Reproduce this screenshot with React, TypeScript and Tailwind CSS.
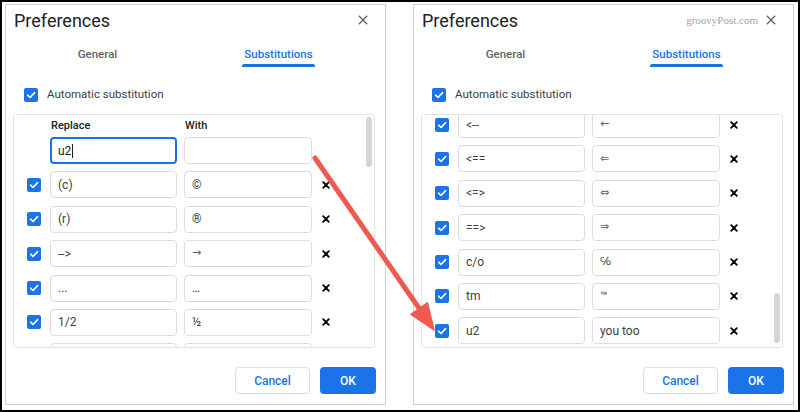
type Row = { from: string; to: string; sym?: boolean };

const leftRows: Row[] = [
  { from: "(c)", to: "©" },
  { from: "(r)", to: "®" },
  { from: "-->", to: "→", sym: true },
  { from: "...", to: "…" },
  { from: "1/2", to: "½" },
  { from: "", to: "" },
];

const rightRows: Row[] = [
  { from: "<--", to: "←", sym: true },
  { from: "<==", to: "⇐", sym: true },
  { from: "<=>", to: "⇔", sym: true },
  { from: "==>", to: "⇒", sym: true },
  { from: "c/o", to: "℅", sym: true },
  { from: "tm", to: "™" },
  { from: "u2", to: "you too" },
];

function Checkbox() {
  return (
    <div className="w-[14px] h-[14px] shrink-0 rounded-[2px] bg-[#1a73e8] flex items-center justify-center">
      <svg width="10" height="10" viewBox="0 0 10 10">
        <path d="M1.6 5.2 L4 7.5 L8.6 2.6" fill="none" stroke="white" strokeWidth="1.6" strokeLinecap="round" strokeLinejoin="round" />
      </svg>
    </div>
  );
}

function DeleteMark() {
  return (
    <svg width="8" height="8" viewBox="0 0 8 8" className="shrink-0">
      <path d="M1.2 1.2 L6.8 6.8 M6.8 1.2 L1.2 6.8" stroke="#000" strokeWidth="1.9" strokeLinecap="round" />
    </svg>
  );
}

function CloseIcon() {
  return (
    <svg width="10" height="10" viewBox="0 0 10 10" className="shrink-0">
      <path d="M0.8 0.8 L9.2 9.2 M9.2 0.8 L0.8 9.2" stroke="#5f6368" strokeWidth="1.3" />
    </svg>
  );
}

function Field({ text, width, sym }: { text: string; width: string; sym?: boolean }) {
  return (
    <div
      className={`${width} h-[27px] shrink-0 rounded-[4px] border border-[#dadce0] flex items-center pl-[7px] text-[#3c4043] ${
        sym ? "text-[11px] font-['DejaVu_Sans',sans-serif] text-[#5f6368]" : "text-[12px]"
      }`}
    >
      {text}
    </div>
  );
}

function SubRow({ row }: { row: Row }) {
  return (
    <div className="flex items-center pl-[13px]">
      <Checkbox />
      <div className="ml-[9px] flex gap-[7px]">
        <Field text={row.from} width="w-[127px]" />
        <Field text={row.to} width="w-[128px]" sym={row.sym} />
      </div>
      <div className="ml-[10px]">
        <DeleteMark />
      </div>
    </div>
  );
}

function Dialog({ right }: { right?: boolean }) {
  const rows = right ? rightRows : leftRows;
  return (
    <div className="w-[381px] h-[401px] border border-[#d0d0d0] bg-white flex flex-col shrink-0">
      <div className="h-[30px] flex items-center pl-[8px] pr-[17px]">
        <span className="flex-1 text-[18px] text-[#202124]">Preferences</span>
        {right && (
          <span className="mr-[8px] text-[11px] text-[#a3a3a3] font-['Liberation_Serif',serif]">groovyPost.com</span>
        )}
        <CloseIcon />
      </div>

      <div className="flex pl-[1px]">
        <div className="w-[181px] flex flex-col items-center pt-[12px]">
          <span className="text-[11.5px] leading-[14px] font-medium text-[#5f6368]">General</span>
        </div>
        <div className="w-[181px] flex flex-col items-center pt-[12px]">
          <span className="text-[11.5px] leading-[14px] font-medium text-[#1a73e8]">Substitutions</span>
          <div className="mt-[3px] w-[73px] h-[3px] rounded-t-[2px] bg-[#1a73e8]" />
        </div>
      </div>

      <div className="mt-[21px] h-[14px] pl-[18px] flex items-center">
        <Checkbox />
        <span className="ml-[9px] text-[11.5px] text-[#3c4043]">Automatic substitution</span>
      </div>

      <div className="relative mt-[12px] ml-[7px] w-[362px] h-[234px] border border-[#e3e3e3] rounded-[4px] overflow-hidden">
        {right ? (
          <div className="-mt-[4px] flex flex-col gap-[7.4px]">
            {rows.map((r) => (
              <SubRow key={r.from} row={r} />
            ))}
          </div>
        ) : (
          <div className="flex flex-col">
            <div className="h-[22px] flex items-center text-[11px] font-medium text-[#202124]">
              <div className="w-[37px] shrink-0" />
              <div className="w-[134px] shrink-0">Replace</div>
              <div>With</div>
            </div>
            <div className="flex flex-col gap-[7.4px]">
              <div className="flex items-center pl-[36px] gap-[7px]">
                <div className="w-[127px] h-[27px] rounded-[4px] border-2 border-[#1a73e8] flex items-center pl-[6px] text-[12px] text-[#202124]">
                  u2
                  <span className="ml-[1px] w-[1px] h-[14px] bg-[#202124]" />
                </div>
                <div className="w-[128px] h-[27px] rounded-[4px] border border-[#dadce0]" />
              </div>
              {rows.map((r, i) => (
                <SubRow key={i} row={r} />
              ))}
            </div>
          </div>
        )}
        <div
          className={`absolute right-[2px] w-[6px] h-[50px] rounded-full bg-[#d6d6d6] ${right ? "top-[178px]" : "top-[2px]"}`}
        />
      </div>

      <div className="mt-[19px] pr-[9px] flex justify-end gap-[10px]">
        <button className="w-[75px] h-[27px] rounded-[4px] border border-[#dadce0] text-[12px] font-medium text-[#1a73e8]">
          Cancel
        </button>
        <button className="w-[56px] h-[27px] rounded-[4px] bg-[#1a73e8] text-[12px] font-medium text-white">
          OK
        </button>
      </div>
    </div>
  );
}

export default function App() {
  return (
    <div className="relative w-[800px] h-[412px] border-2 border-black bg-white font-['Roboto',sans-serif] overflow-hidden">
      <div className="flex gap-[27px] pl-[3px] pt-[2px]">
        <Dialog />
        <Dialog right />
      </div>
      <svg className="absolute left-0 top-0 pointer-events-none" width="800" height="412" viewBox="2 2 800 412">
        <line x1="315" y1="158" x2="421" y2="311" stroke="#ef5a4f" strokeWidth="5" strokeLinecap="round" />
        <polygon points="434,330 411,314.3 427.4,302.9" fill="#ef5a4f" stroke="#ef5a4f" strokeWidth="1.5" strokeLinejoin="round" />
      </svg>
    </div>
  );
}
